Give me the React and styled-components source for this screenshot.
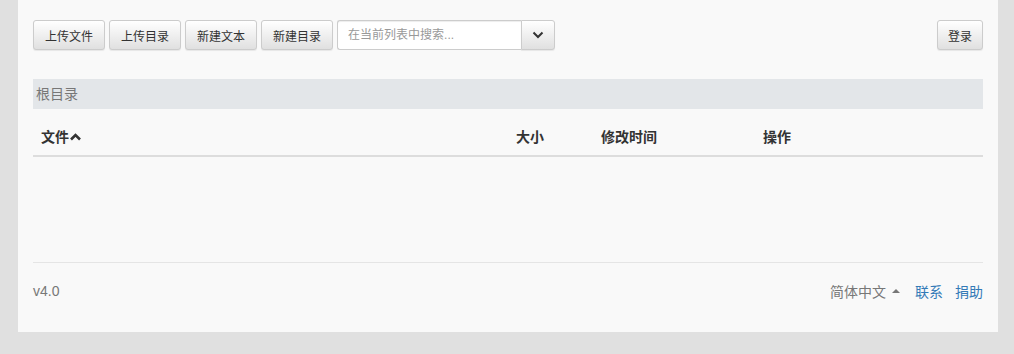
import React from 'react';
import styled, { createGlobalStyle } from 'styled-components';

const GlobalStyle = createGlobalStyle`
  html, body {
    margin: 0;
    padding: 0;
    background: #e0e0e0;
  }
  body {
    font-family: "Helvetica Neue", "Liberation Sans", "Noto Sans CJK SC", sans-serif;
    font-size: 14px;
    color: #333;
  }
  * {
    box-sizing: border-box;
  }
`;

export default function App() {
  return (
    <>
      <GlobalStyle />
      <Page>
        <Container>
          <Toolbar>
            <LeftTools>
              <Button>上传文件</Button>
              <Button>上传目录</Button>
              <Button>新建文本</Button>
              <Button>新建目录</Button>
              <SearchGroup>
                <SearchInput placeholder='在当前列表中搜索...' />
                <DropButton>
                  <svg width='12' height='8' viewBox='0 0 12 8'>
                    <path
                      d='M1.5 1.5 L6 6 L10.5 1.5'
                      fill='none'
                      stroke='#333'
                      strokeWidth='2'
                    />
                  </svg>
                </DropButton>
              </SearchGroup>
            </LeftTools>
            <LoginButton>登录</LoginButton>
          </Toolbar>

          <Breadcrumb>根目录</Breadcrumb>

          <Table>
            <thead>
              <tr>
                <Th $width='475px'>
                  文件
                  <svg width='11' height='8' viewBox='0 0 11 8'>
                    <path
                      d='M1 6.5 L5.5 2 L10 6.5'
                      fill='none'
                      stroke='#333'
                      strokeWidth='2.6'
                    />
                  </svg>
                </Th>
                <Th $width='85px'>大小</Th>
                <Th $width='162px'>修改时间</Th>
                <Th>操作</Th>
              </tr>
            </thead>
          </Table>

          <Footer>
            <Version>v4.0</Version>
            <FooterLinks>
              <Lang>
                简体中文
                <Caret />
              </Lang>
              <Link href='#'>联系</Link>
              <Link href='#'>捐助</Link>
            </FooterLinks>
          </Footer>
        </Container>
      </Page>
    </>
  );
}

const Page = styled.div`
  width: 100%;
  height: 354px;
  padding: 0 16px 0 18px;
`;

const Container = styled.div`
  width: 980px;
  height: 332px;
  background: #f9f9f9;
  padding: 20px 15px 0;
  display: flex;
  flex-direction: column;
`;

const Toolbar = styled.div`
  display: flex;
  justify-content: space-between;
  align-items: center;
  height: 30px;
`;

const LeftTools = styled.div`
  display: flex;
  gap: 4px;
  align-items: center;
`;

const Button = styled.button`
  height: 30px;
  padding: 0 11px;
  font-family: inherit;
  font-size: 12px;
  color: #333;
  background-image: linear-gradient(to bottom, #fff 0%, #e0e0e0 100%);
  border: 1px solid #ccc;
  border-radius: 3px;
  box-shadow: inset 0 1px 0 rgba(255, 255, 255, 0.15),
    0 1px 1px rgba(0, 0, 0, 0.075);
  cursor: pointer;
`;

const LoginButton = styled(Button)`
  padding: 0 10px;
`;

const SearchGroup = styled.div`
  display: flex;
  height: 30px;
`;

const SearchInput = styled.input`
  width: 184px;
  height: 30px;
  padding: 5px 10px;
  font-family: inherit;
  font-size: 12px;
  border: 1px solid #ccc;
  border-right: none;
  border-radius: 3px 0 0 3px;
  background: #fff;
  box-shadow: inset 0 1px 1px rgba(0, 0, 0, 0.075);
  outline: none;
  &::placeholder {
    color: #999;
  }
`;

const DropButton = styled(Button)`
  width: 34px;
  padding: 0;
  border-radius: 0 3px 3px 0;
  display: flex;
  align-items: center;
  justify-content: center;
`;

const Breadcrumb = styled.div`
  margin-top: 29px;
  height: 30px;
  background: #e3e6e9;
  color: #777;
  padding: 0 3px 2px;
  display: flex;
  align-items: center;
`;

const Table = styled.table`
  width: 100%;
  margin-top: 12px;
  border-collapse: collapse;
`;

const Th = styled.th`
  width: ${(props) => props.$width || 'auto'};
  text-align: left;
  font-weight: bold;
  padding: 5px 8px 9px;
  border-bottom: 2px solid #ddd;
  height: 35px;
  svg {
    margin-left: 1px;
    vertical-align: 1px;
  }
`;

const Footer = styled.div`
  margin-top: 105px;
  border-top: 1px solid #e5e5e5;
  padding-top: 18px;
  display: flex;
  justify-content: space-between;
  align-items: center;
`;

const Version = styled.div`
  color: #777;
`;

const FooterLinks = styled.div`
  display: flex;
  align-items: center;
  gap: 12px;
`;

const Lang = styled.span`
  color: #777;
  display: flex;
  align-items: center;
  margin-right: 3px;
`;

const Caret = styled.span`
  display: inline-block;
  width: 0;
  height: 0;
  margin-left: 6px;
  border-left: 4px solid transparent;
  border-right: 4px solid transparent;
  border-bottom: 4px solid #777;
`;

const Link = styled.a`
  color: #337ab7;
  text-decoration: none;
`;
